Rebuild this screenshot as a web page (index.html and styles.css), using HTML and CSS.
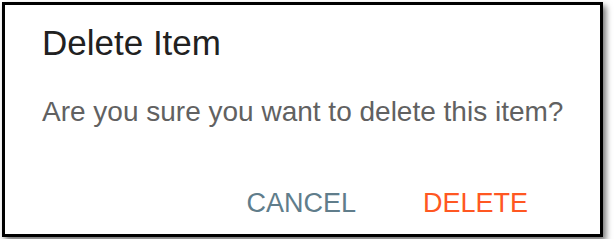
FILE: index.html
```html
<!DOCTYPE html>
<html lang="en">
<head>
<meta charset="utf-8">
<title>Delete Item</title>
<link rel="stylesheet" href="styles.css">
</head>
<body>
<div class="page">
  <div class="dialog" role="dialog" aria-labelledby="dlg-title">
    <h2 class="dialog-title" id="dlg-title">Delete Item</h2>
    <p class="dialog-text">Are you sure you want to delete this item?</p>
    <div class="dialog-actions">
      <button class="btn btn-cancel" type="button">CANCEL</button>
      <button class="btn btn-delete" type="button">DELETE</button>
    </div>
  </div>
</div>
</body>
</html>
```
FILE: styles.css
```css
html, body {
  margin: 0;
  padding: 0;
  background: #ffffff;
}
.page {
  padding: 2px;
}
.dialog {
  box-sizing: border-box;
  width: 601px;
  height: 235px;
  border: 3px solid #000;
  background: #fff;
  box-shadow: 3px 4px 6px rgba(0, 0, 0, 0.55);
  padding: 18px 20px 0 37px;
  font-family: "Liberation Sans", Arial, Helvetica, sans-serif;
}
.dialog-title {
  margin: 0;
  font-size: 35px;
  line-height: 40px;
  font-weight: 400;
  color: #212121;
}
.dialog-text {
  margin: 33px 0 0 0;
  font-size: 28px;
  line-height: 32px;
  color: #616161;
  white-space: nowrap;
}
.dialog-actions {
  display: flex;
  justify-content: flex-end;
  gap: 35px;
  margin-top: 59px;
  padding-right: 36px;
}
.btn {
  border: 0;
  background: transparent;
  padding: 0 16px;
  margin: 0;
  font-family: inherit;
  font-size: 27px;
  line-height: 32px;
  cursor: pointer;
}
.btn-cancel {
  color: #607d8b;
}
.btn-delete {
  color: #ff5722;
}
```
